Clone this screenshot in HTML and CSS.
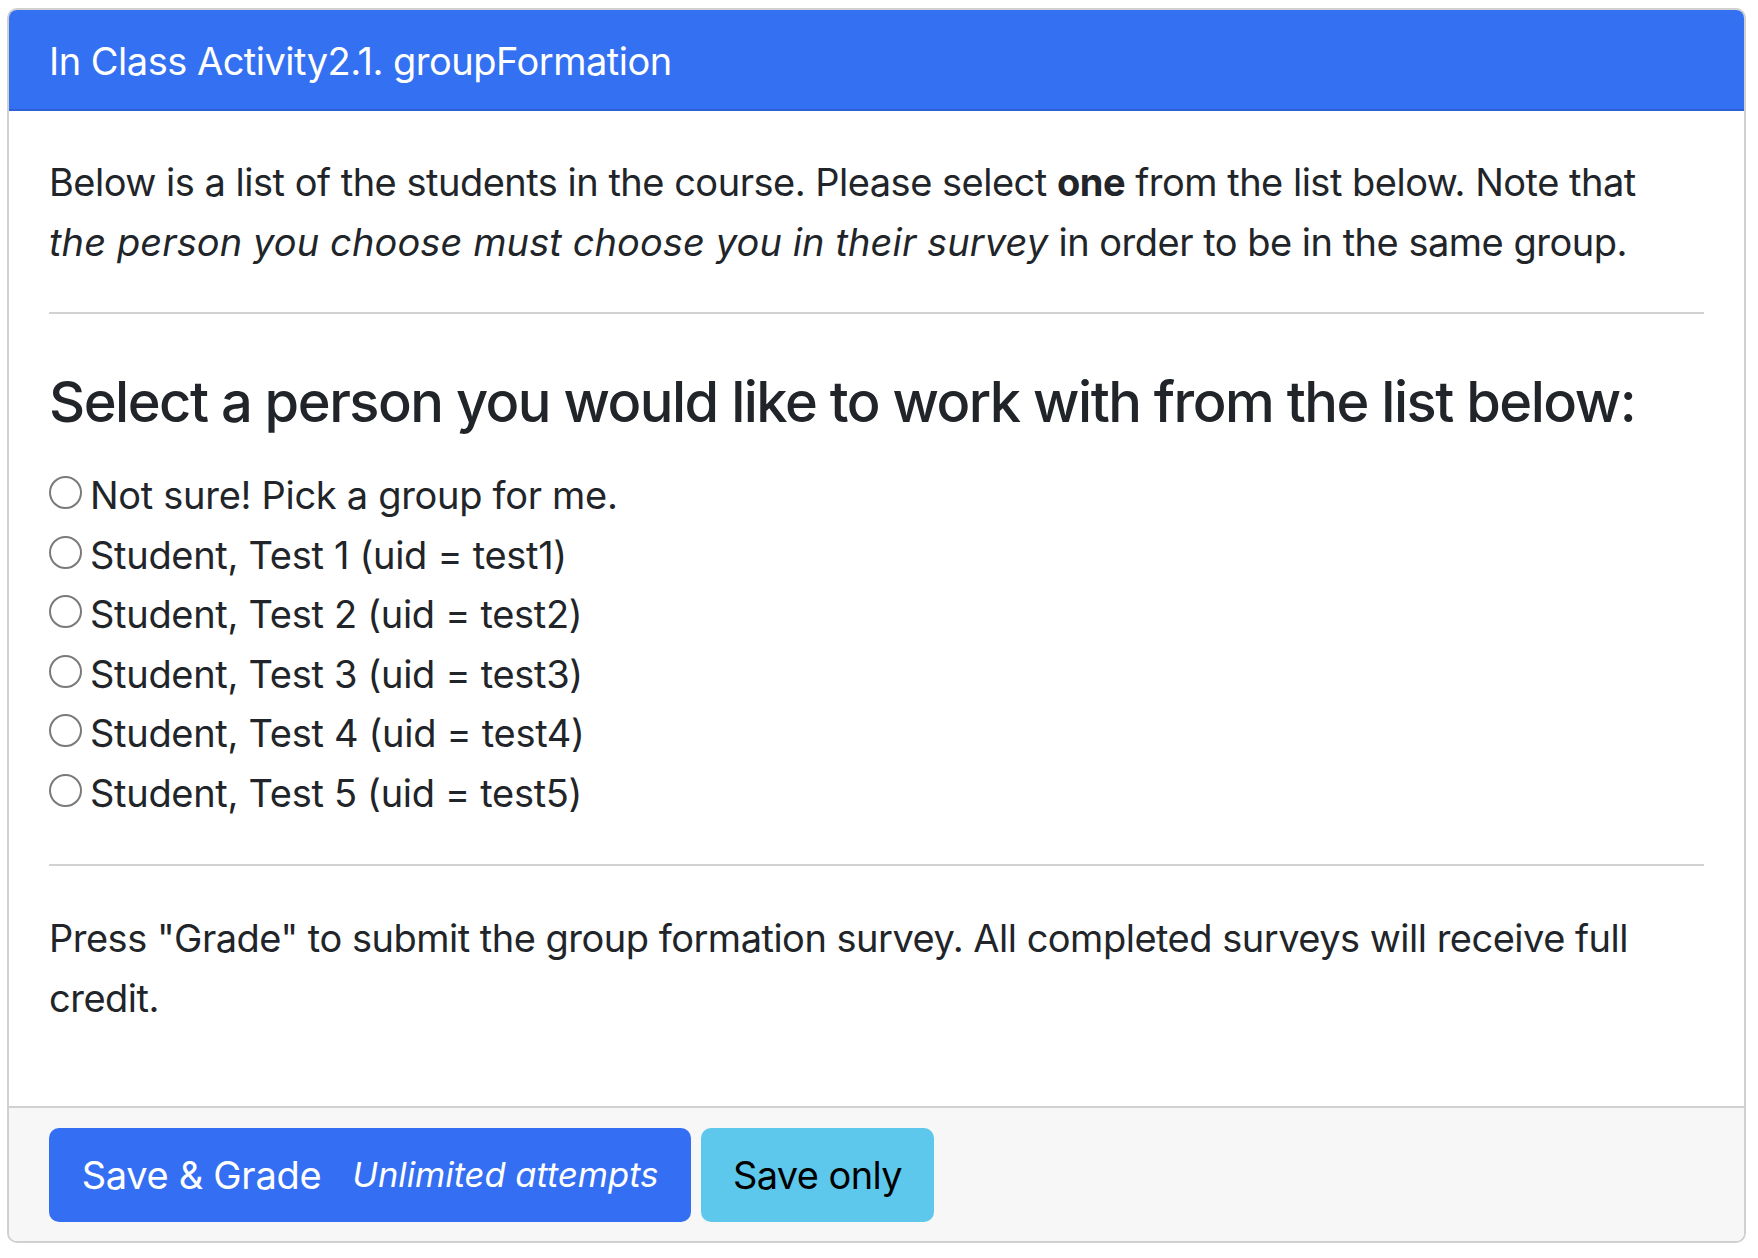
FILE: index.html
```html
<!DOCTYPE html>
<html lang="en">
<head>
<meta charset="utf-8">
<title>In Class Activity2.1. groupFormation</title>
<link rel="stylesheet" href="styles.css">
</head>
<body>
<div class="card">
  <div class="card-header">In Class Activity2.1. groupFormation</div>
  <div class="card-body">
    <p class="prompt">Below is a list of the students in the course. Please select <b>one</b> from the list below. Note that <i>the person you choose must choose you in their survey</i> in order to be in the same group.</p>
    <hr class="rule">
    <h4 class="question">Select a person you would like to work with from the list below:</h4>
    <div class="choices">
      <label class="choice"><input type="radio" name="pick" class="radio"><span>Not sure! Pick a group for me.</span></label>
      <label class="choice"><input type="radio" name="pick" class="radio"><span>Student, Test 1 (uid = test1)</span></label>
      <label class="choice"><input type="radio" name="pick" class="radio"><span>Student, Test 2 (uid = test2)</span></label>
      <label class="choice"><input type="radio" name="pick" class="radio"><span>Student, Test 3 (uid = test3)</span></label>
      <label class="choice"><input type="radio" name="pick" class="radio"><span>Student, Test 4 (uid = test4)</span></label>
      <label class="choice"><input type="radio" name="pick" class="radio"><span>Student, Test 5 (uid = test5)</span></label>
    </div>
    <hr class="rule rule-lower">
    <p class="prompt prompt-last">Press "Grade" to submit the group formation survey. All completed surveys will receive full credit.</p>
  </div>
  <div class="card-footer">
    <button class="btn btn-primary" type="button"><span class="btn-label">Save &amp; Grade</span><small class="btn-note">Unlimited attempts</small></button>
    <button class="btn btn-info" type="button"><span class="btn-label">Save only</span></button>
  </div>
</div>
</body>
</html>
```
FILE: styles.css
```css
html, body {
  margin: 0;
  padding: 0;
  background: #ffffff;
}

body {
  padding: 8px 12px 0 7px;
  font-family: "Inter", "Liberation Sans", sans-serif;
  font-size: 38px;
  letter-spacing: -0.5px;
  line-height: 60px;
  color: #212529;
}

.card {
  border: 2px solid #d0d0d0;
  border-radius: 10px;
  overflow: hidden;
  background: #ffffff;
}

.card-header {
  background: #3470f2;
  color: #ffffff;
  padding: 21px 40px 18px 40px;
  border-bottom: 2px solid #2c62d6;
}

.card-body {
  padding: 41px 40px 38px 40px;
}

.prompt {
  margin: 0 0 40px 0;
  max-width: 1625px;
}

.prompt b {
  font-weight: 700;
}

.prompt i {
  letter-spacing: 0.1px;
}

.rule {
  margin: 0;
  border: 0;
  border-top: 2px solid #d2d2d2;
  height: 0;
}

.question {
  margin: 55px 0 29px 0;
  font-size: 56px;
  font-weight: 500;
  letter-spacing: -1.5px;
  line-height: 67px;
}

.choices {
  display: flex;
  flex-direction: column;
}

.choice {
  display: flex;
  align-items: flex-start;
  height: 59.6px;
  letter-spacing: -0.3px;
}

.radio {
  appearance: none;
  -webkit-appearance: none;
  width: 33px;
  height: 33px;
  margin: 11px 8px 0 0;
  border: 2px solid #7a7a7a;
  border-radius: 50%;
  background: #ffffff;
  flex: 0 0 auto;
}

.rule-lower {
  margin-top: 41px;
}

.prompt-last {
  margin-top: 42px;
}

.card-footer {
  background: #f7f7f7;
  border-top: 2px solid #d0d0d0;
  padding: 20px 40px 19px 40px;
  display: flex;
  gap: 10px;
}

.btn {
  box-sizing: border-box;
  display: inline-flex;
  align-items: center;
  justify-content: center;
  white-space: nowrap;
  height: 94px;
  border: 0;
  border-radius: 10px;
  padding: 0 30px;
  font-family: "Inter", "Liberation Sans", sans-serif;
  font-size: 38px;
  letter-spacing: -0.3px;
  line-height: 60px;
  cursor: pointer;
}

.btn-primary {
  background: #346ff3;
  color: #ffffff;
  width: 642px;
}

.btn-info {
  background: #5dc8ec;
  color: #000000;
  width: 233px;
  letter-spacing: -0.6px;
}

.btn-note {
  margin-left: 31px;
  font-size: 34.5px;
  font-style: italic;
  letter-spacing: 0;
}
```
